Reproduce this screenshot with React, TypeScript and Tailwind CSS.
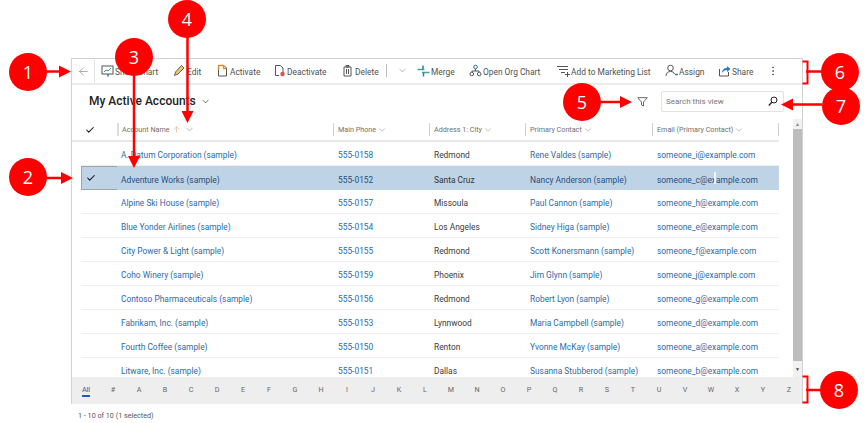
import { Check, ChevronDown, ArrowLeft, MoreVertical, ArrowUp } from "lucide-react";
import type { ReactNode } from "react";

const rows = [
  ["A. Datum Corporation (sample)", "555-0158", "Redmond", "Rene Valdes (sample)", "someone_i@example.com"],
  ["Adventure Works (sample)", "555-0152", "Santa Cruz", "Nancy Anderson (sample)", "someone_c@example.com"],
  ["Alpine Ski House (sample)", "555-0157", "Missoula", "Paul Cannon (sample)", "someone_h@example.com"],
  ["Blue Yonder Airlines (sample)", "555-0154", "Los Angeles", "Sidney Higa (sample)", "someone_e@example.com"],
  ["City Power & Light (sample)", "555-0155", "Redmond", "Scott Konersmann (sample)", "someone_f@example.com"],
  ["Coho Winery (sample)", "555-0159", "Phoenix", "Jim Glynn (sample)", "someone_j@example.com"],
  ["Contoso Pharmaceuticals (sample)", "555-0156", "Redmond", "Robert Lyon (sample)", "someone_g@example.com"],
  ["Fabrikam, Inc. (sample)", "555-0153", "Lynnwood", "Maria Campbell (sample)", "someone_d@example.com"],
  ["Fourth Coffee (sample)", "555-0150", "Renton", "Yvonne McKay (sample)", "someone_a@example.com"],
  ["Litware, Inc. (sample)", "555-0151", "Dallas", "Susanna Stubberod (sample)", "someone_b@example.com"],
];

const letters = "#ABCDEFGHIJKLMNOPQRSTUVWXYZ".split("");

function Icon({ children }: { children: ReactNode }) {
  return (
    <svg width="13" height="13" viewBox="0 0 13 13" fill="none" className="shrink-0">
      {children}
    </svg>
  );
}

const icons = {
  chart: (
    <Icon>
      <rect x="1" y="2" width="11" height="8" stroke="#555" />
      <path d="M3 8l2-2 2 1 3-3" stroke="#2e9e6b" />
      <path d="M7 10v2.500" stroke="#1b76c4" strokeWidth="1.500" />
    </Icon>
  ),
  edit: (
    <Icon>
      <path d="M1.500 11.500l1-3.500 6-6.500 2.500 2.500-6 6z" fill="#ecc873" stroke="#555" strokeWidth="0.900" />
    </Icon>
  ),
  activate: (
    <Icon>
      <path d="M2.500 1.500h5.500l2.500 2.500v8h-8z" stroke="#555" />
      <path d="M2.500 6V1.500h5v3h3" stroke="#e08a2c" strokeWidth="1.300" />
    </Icon>
  ),
  deactivate: (
    <Icon>
      <path d="M2.500 1.500h5l2.500 2.500v4M6 11.500h-3.500v-10" stroke="#555" />
      <circle cx="9.500" cy="10" r="2.200" fill="#d9534f" />
    </Icon>
  ),
  trash: (
    <Icon>
      <path d="M3 3h7v9H3zM5 1.500h3V3H5zM5.500 5v5M7.500 5v5" stroke="#555" />
    </Icon>
  ),
  merge: (
    <Icon>
      <path d="M0.500 5.500h7M5 8.500h7.500" stroke="#4aa58c" strokeWidth="1.500" />
      <path d="M6 1.500v4M6.500 8.500v4" stroke="#2b7cc2" strokeWidth="1.500" />
    </Icon>
  ),
  org: (
    <Icon>
      <circle cx="6.500" cy="3" r="1.800" stroke="#2b6ca8" />
      <circle cx="2.800" cy="10" r="1.800" stroke="#555" />
      <circle cx="10.200" cy="10" r="1.800" stroke="#555" />
      <path d="M6.500 5v2M3 8V7h7v1" stroke="#555" />
    </Icon>
  ),
  list: (
    <Icon>
      <path d="M0 2.500h11M2 5.500h9M4 8.500h4" stroke="#555" />
      <path d="M10.500 8v5M8 10.500h5" stroke="#555" />
    </Icon>
  ),
  assign: (
    <Icon>
      <circle cx="5.500" cy="4" r="2.800" stroke="#555" />
      <path d="M1 12c0-3 2-4.500 4.500-4.500S9 8.500 9.500 10" stroke="#555" />
      <path d="M10 10.500h3" stroke="#2b7cc2" strokeWidth="1.500" />
    </Icon>
  ),
  share: (
    <Icon>
      <path d="M1.500 5v7h9V8" stroke="#555" />
      <path d="M4 9c0-3 2-5 5-5V2l3.500 3L9 8V6C7 6 5 7 4 9z" fill="#2b7cc2" />
    </Icon>
  ),
};

const commands: [ReactNode, string, string][] = [
  [icons.chart, "Show Chart", "w-[72px]"],
  [icons.edit, "Edit", "w-[43px]"],
  [icons.activate, "Activate", "w-[57px]"],
  [icons.deactivate, "Deactivate", "w-[68px]"],
  [icons.trash, "Delete", "w-[45px]"],
];

const commands2: [ReactNode, string, string][] = [
  [icons.merge, "Merge", "w-[52px]"],
  [icons.org, "Open Org Chart", "w-[88px]"],
  [icons.list, "Add to Marketing List", "w-[108px]"],
  [icons.assign, "Assign", "w-[53px]"],
  [icons.share, "Share", "w-[49px]"],
];

function Command({ icon, label, width }: { icon: ReactNode; label: string; width: string }) {
  return (
    <div className={`flex items-center gap-[1px] shrink-0 whitespace-nowrap ${width}`}>
      {icon}
      <span className="pt-[2px]">{label}</span>
    </div>
  );
}

const columns = ["Main Phone", "Address 1: City", "Primary Contact", "Email (Primary Contact)"];
const gridCols = "grid grid-cols-[36px_216px_96px_96px_127px_127px]";

function Badge({ n, className }: { n: number; className: string }) {
  return (
    <div
      className={`absolute w-[38px] h-[38px] rounded-full bg-[#fe0000] text-white flex items-center justify-center font-['Open_Sans',sans-serif] text-[18px] leading-none ${className}`}
    >
      {n}
    </div>
  );
}

export default function App() {
  return (
    <div className="relative w-[866px] h-[423px] overflow-hidden bg-white pt-[58px] pl-[71px] font-['Roboto',sans-serif] text-[#444]">
      <div className="w-[732px] h-[346px] flex flex-col border border-b-0 border-[#d2d2d2]">
        {/* command bar */}
        <div className="h-[26px] shrink-0 flex items-center border-b-2 border-[#ececec] text-[8.400px] text-[#505050]">
          <div className="w-[23px] h-full flex items-center justify-center border-r border-[#e4e4e4] shrink-0">
            <ArrowLeft size={13} strokeWidth={1} color="#666" />
          </div>
          <div className="flex items-center pl-[6px]">
            {commands.map(([icon, label, width]) => (
              <Command key={label} icon={icon} label={label} width={width} />
            ))}
            <div className="w-px h-[13px] bg-[#bbb] shrink-0" />
            <div className="w-[30px] flex justify-center shrink-0">
              <ChevronDown size={11} strokeWidth={1} color="#666" />
            </div>
            {commands2.map(([icon, label, width]) => (
              <Command key={label} icon={icon} label={label} width={width} />
            ))}
            <MoreVertical size={12} strokeWidth={1.500} color="#444" />
          </div>
        </div>

        {/* view title + search */}
        <div className="h-[34px] shrink-0 flex items-center justify-between pl-[17px] pr-[18px]">
          <div className="flex items-center gap-[4px] mb-[2px] text-[12px] font-medium text-[#222]">
            My Active Accounts
            <ChevronDown size={11} strokeWidth={1.500} color="#333" />
          </div>
          <div className="flex items-center gap-[13px] mb-[1px]">
            <svg width="11" height="10" viewBox="0 0 11 10" fill="none">
              <path d="M0.700 0.700h9.600L6.500 5v4L4.500 8V5z" stroke="#444" strokeWidth="0.800" />
            </svg>
            <div className="w-[123px] h-[21px] flex items-center justify-between pl-[4px] pr-[5px] border border-[#e2e2e2] rounded-[2px] text-[8px] text-[#777]">
              Search this view
              <svg width="10" height="11" viewBox="0 0 10 11" fill="none">
                <circle cx="6" cy="4" r="3" stroke="#222" />
                <path d="M3.800 6.200L0.800 9.500" stroke="#222" strokeWidth="1.300" />
              </svg>
            </div>
          </div>
        </div>

        {/* grid + scrollbar */}
        <div className="flex-1 min-h-0 flex pl-[9px]">
          <div className="w-[698px] shrink-0 flex flex-col min-h-0">
            <div className={`${gridCols} h-[23px] shrink-0 items-center border-b-2 border-[#e8e8e8] text-[7.200px] text-[#6f6f6f] -ml-[9px] w-[707px] pl-[9px]`}>
              <div className="flex pl-[4px]">
                <Check size={10} strokeWidth={2.500} color="#111" />
              </div>
              <div className="h-[13px] flex items-center pl-[3px] border-l-2 border-[#ddd]">
                <span className="pt-[1px]">Account Name</span>
                <ArrowUp size={9} strokeWidth={1} color="#c27b50" className="ml-[2px]" />
                <ChevronDown size={11} strokeWidth={1} color="#666" className="ml-[3px]" />
              </div>
              {columns.map((c) => (
                <div key={c} className="h-[13px] flex items-center gap-[1px] pl-[4px] border-l border-[#ccc] last:border-r whitespace-nowrap">
                  <span className="pt-[1px]">{c}</span>
                  <ChevronDown size={10} strokeWidth={1} color="#666" />
                </div>
              ))}
            </div>
            <div className="flex-1 min-h-0 overflow-hidden text-[8.400px]">
              {rows.map((r, i) => {
                const selected = i === 1;
                return (
                  <div
                    key={r[0]}
                    className={`${gridCols} h-[24px] items-center ${selected ? "bg-[#bfd3e7] text-[#1f4f80]" : "border-b border-[#efefef] text-[#2b6ca8]"}`}
                  >
                    <div className={`h-full flex items-center pl-[4px] ${selected ? "border border-r-0 border-[#a3a3a3]" : ""}`}>
                      {selected && <Check size={10} strokeWidth={2.500} color="#111" />}
                    </div>
                    <div className="pl-[4px] pt-[4px] truncate">{r[0]}</div>
                    <div className="pl-[5px] pt-[4px]">{r[1]}</div>
                    <div className={`pl-[5px] pt-[4px] ${selected ? "text-[#333]" : "text-[#3c3c3c]"}`}>{r[2]}</div>
                    <div className="pl-[5px] pt-[4px] whitespace-nowrap">{r[3]}</div>
                    <div className="pl-[5px] pt-[4px] whitespace-nowrap relative">
                      {r[4]}
                      {selected && <div className="absolute left-[62px] top-[2px] w-[2px] h-[12px] bg-white/80" />}
                    </div>
                  </div>
                );
              })}
            </div>
          </div>
          <div className="ml-[14px] w-[9px] shrink-0 flex flex-col items-center bg-[#f1f1f1]">
            <div className="h-[10px] flex items-center text-[5px] leading-none text-[#888]">▲</div>
            <div className="w-full flex-1 bg-[#bdbdbd]" />
            <div className="h-[16px] flex items-center text-[5px] leading-none text-[#444]">▼</div>
          </div>
        </div>

        {/* alphabet jump bar */}
        <div className="h-[27px] shrink-0 flex items-center bg-[#eeeeee] text-[7.200px] text-[#666]">
          <div className="w-[28px] shrink-0 flex justify-center">
            <span className="border-b-2 border-[#1f5fa8] leading-[11px] text-[#2b5b8f]">All</span>
          </div>
          {letters.map((l) => (
            <div key={l} className="w-[26px] shrink-0 text-center">
              {l}
            </div>
          ))}
        </div>
      </div>

      <div className="pl-[7px] pt-[7px] text-[7.200px] text-[#555]">1 - 10 of 10 (1 selected)</div>

      {/* callouts */}
      <svg className="absolute inset-0" width="866" height="423" fill="none">
        <g stroke="#fe0000" strokeWidth="2.500">
          <path d="M46 71.500h16M46 178h18M134 70v90M187.500 30v85M600 102h24M806 71.500h16M822 104.500h-32M806 390h16" />
          <path d="M802.500 61.500h5v22h-5M802.500 376.500h5v26h-5" strokeWidth="2" />
        </g>
        <g fill="#fe0000">
          <path d="M71 71.500l-12-6v12zM73 178l-12-6v12zM134 168l-6-12h12zM187.500 123l-6-12h12zM632 102l-12-6v12zM781 104.500l12-6v12z" />
        </g>
      </svg>
      <Badge n={1} className="left-[9px] top-[53px]" />
      <Badge n={2} className="left-[9px] top-[158px]" />
      <Badge n={3} className="left-[115px] top-[38px]" />
      <Badge n={4} className="left-[168px] top-0" />
      <Badge n={5} className="left-[563px] top-[83px]" />
      <Badge n={6} className="left-[821px] top-[53px]" />
      <Badge n={7} className="left-[822px] top-[87px]" />
      <Badge n={8} className="left-[820px] top-[371px]" />
    </div>
  );
}
